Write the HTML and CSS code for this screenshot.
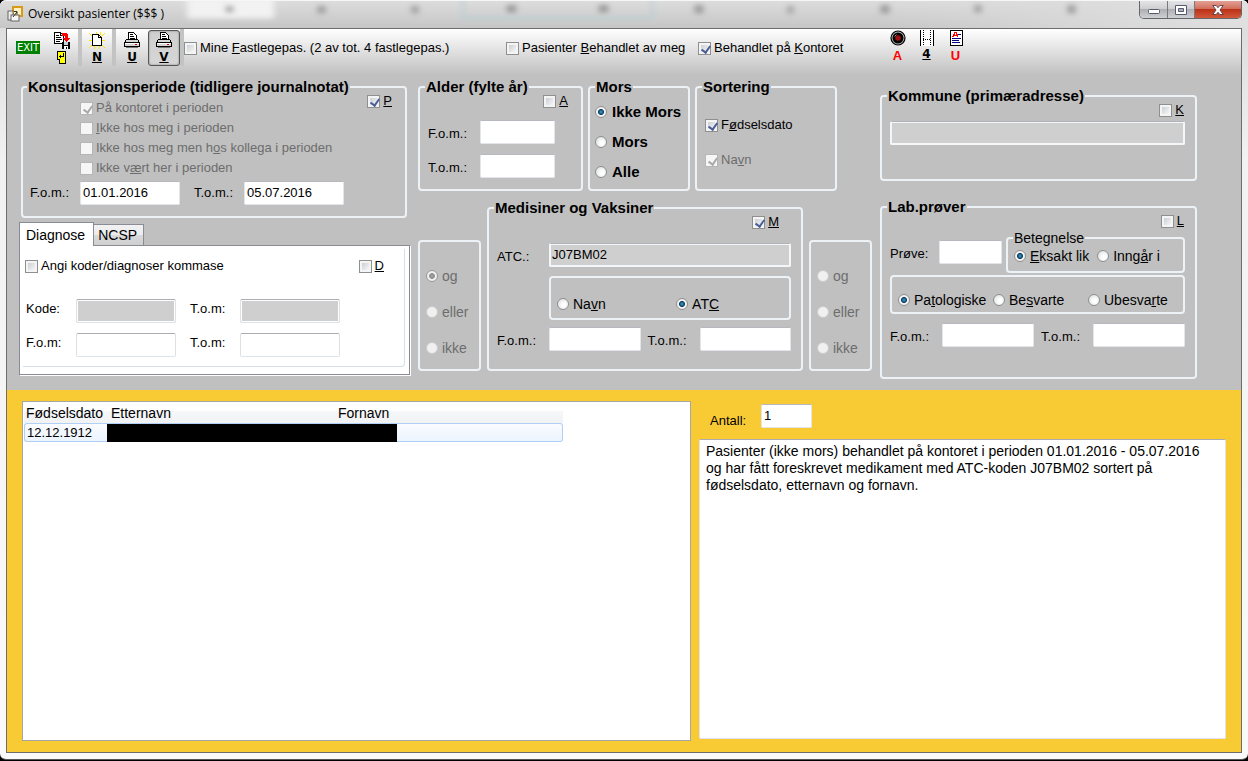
FILE: index.html
```html
<!DOCTYPE html>
<html lang="nb">
<head>
<meta charset="utf-8">
<title>Oversikt pasienter</title>
<link rel="stylesheet" href="styles.css">
</head>
<body>
<div class="window">
  <header class="titlebar">
    <svg class="titlebar__glass" viewBox="0 0 1248 28" preserveAspectRatio="none" aria-hidden="true">
      <defs><filter id="blur" x="-50%" y="-100%" width="200%" height="300%"><feGaussianBlur stdDeviation="3"/></filter></defs>
      <g filter="url(#blur)">
        <rect x="187" y="-4" width="87" height="22" fill="#f2f2f2"/>
        <rect x="463" y="-6" width="189" height="24" fill="none" stroke="#b2ced2" stroke-width="2"/>
        <g fill="#979797">
          <rect x="226" y="5" width="7" height="7"/><rect x="318" y="5" width="7" height="8"/><rect x="412" y="5" width="6" height="8"/>
          <rect x="507" y="4" width="9" height="8"/><rect x="599" y="4" width="9" height="8"/><rect x="695" y="4" width="8" height="9"/>
          <rect x="788" y="5" width="5" height="8"/><rect x="881" y="4" width="8" height="9"/><rect x="975" y="4" width="6" height="8"/><rect x="1068" y="4" width="7" height="9"/>
        </g>
      </g>
    </svg>
    <svg class="titlebar__icon" viewBox="0 0 16 16" width="16" height="16" aria-hidden="true">
      <rect x="6" y="1" width="9" height="9" fill="#fff3c0" stroke="#d99a1c" stroke-width="2"/>
      <rect x="1" y="5" width="5" height="9" fill="#eee" stroke="#666"/>
      <rect x="4" y="9" width="8" height="6" fill="#f6f6f6" stroke="#666"/>
      <path d="M6 11l4-5M7 5.500h3v3" fill="none" stroke="#333"/>
    </svg>
    <h1 class="titlebar__title">Oversikt pasienter ($$$ )</h1>
    <div class="caption">
      <button class="caption__btn caption__btn--min" type="button" aria-label="Minimer">
        <svg viewBox="0 0 14 10" width="14" height="10"><rect x="1.500" y="4.500" width="11" height="4" rx="1" fill="#fff" stroke="#555a70"/></svg>
      </button>
      <button class="caption__btn caption__btn--max" type="button" aria-label="Maksimer">
        <svg viewBox="0 0 12 10" width="12" height="10"><path d="M.500.500h11v9H.500zM3.500 3.500v3h5v-3z" fill="#fff" fill-rule="evenodd" stroke="#555a70"/></svg>
      </button>
      <button class="caption__btn caption__btn--close" type="button" aria-label="Lukk">
        <svg viewBox="0 0 12 10" width="12" height="10"><path d="M.800.500h3.400L6 2.700 7.800.500h3.400L8 5l3.200 4.500H7.800L6 7.300 4.200 9.500H.800L4 5z" fill="#fff" stroke="#5a3a42" stroke-width=".900"/></svg>
      </button>
    </div>
  </header>

  <main class="client">
    <div class="toolbar" role="toolbar">
      <button class="tool tool--exit" type="button"><span class="tool__exit">EXIT</span></button>
      <button class="tool tool--save" type="button" aria-label="Lagre">
        <svg viewBox="0 0 16 33" width="16" height="33" shape-rendering="crispEdges">
          <path d="M.500.500h6l3 3v8h-9z" fill="#fff" stroke="#000"/><path d="M6.500.500v3h3" fill="none" stroke="#000"/>
          <path d="M2 3.500h3M2 5.500h5M2 7.500h6M2 9.500h4" stroke="#000"/>
          <path d="M8 1h5v1h1v4h2v1h-1v1h-1v1h-1v1h-1V9h-1V8h-1V7H9V6h2V4H8z" fill="#f00"/>
          <rect x="8" y="10" width="8" height="7" fill="#000"/><rect x="10" y="10" width="4" height="3" fill="#c8d0d8"/><rect x="10" y="14" width="4" height="3" fill="#fff"/><rect x="12" y="15" width="1" height="2" fill="#000"/>
          <rect x="3" y="19" width="9" height="9" fill="#000"/><rect x="5" y="26" width="7" height="6" fill="#000"/>
          <rect x="4" y="20" width="7" height="7" fill="#ff0"/><rect x="6" y="26" width="5" height="5" fill="#ff0"/>
          <path d="M9.500 21v4M5 24.500h5M6.500 23v3" stroke="#000"/>
        </svg>
      </button>
      <span class="toolbar__bar"></span>
      <button class="tool tool--new" type="button">
        <svg viewBox="0 0 16 17" width="16" height="17" shape-rendering="crispEdges">
          <path d="M0 1l4 4M16 1l-4 4M0 16l4-4M16 16l-4-4M7 0v3M0 8h3M13 8h3M5 14v3M10 14v3M11 0v3" stroke="#ffe600"/>
          <path d="M3.500 2.500h6l3 3v8h-9z" fill="#fff" stroke="#000"/><path d="M9.500 2.500v3h3" fill="none" stroke="#000"/>
        </svg>
        <u class="tool__key">N</u>
      </button>
      <span class="toolbar__bar"></span>
      <button class="tool" type="button">
        <svg viewBox="0 0 16 17" width="16" height="17" shape-rendering="crispEdges">
          <path d="M4.500 7.500v-7h5l3 3v4z" fill="#fff" stroke="#000"/><path d="M6 2.500h3M6 4.500h4M6 6.500h5" stroke="#000"/>
          <path d="M2.500 7.500h11l2 3v4h-15v-4z" fill="#d4d4d4" stroke="#000"/><path d="M1 10.500h14" stroke="#000"/><path d="M1 11.500h14" stroke="#fff"/><path d="M11 12.500h2" stroke="#c00"/><path d="M2 15.500h12" stroke="#777"/>
        </svg>
        <u class="tool__key">U</u>
      </button>
      <button class="tool tool--pressed" type="button" aria-pressed="true">
        <svg viewBox="0 0 16 17" width="16" height="17" shape-rendering="crispEdges">
          <path d="M4.500 7.500v-7h5l3 3v4z" fill="#fff" stroke="#000"/><path d="M6 2.500h3M6 4.500h4M6 6.500h5" stroke="#000"/>
          <path d="M2.500 7.500h11l2 3v4h-15v-4z" fill="#d4d4d4" stroke="#000"/><path d="M1 10.500h14" stroke="#000"/><path d="M1 11.500h14" stroke="#fff"/><path d="M11 12.500h2" stroke="#c00"/><path d="M2 15.500h12" stroke="#777"/>
        </svg>
        <u class="tool__key">V</u>
      </button>
      <span class="toolbar__bar"></span>
      <label class="choice toolbar__mine"><input type="checkbox" class="check"><span>Mine <u>F</u>astlegepas. (2 av tot. 4 fastlegepas.)</span></label>
      <label class="choice toolbar__opt"><input type="checkbox" class="check"><span>Pasienter <u>B</u>ehandlet av meg</span></label>
      <label class="choice toolbar__opt"><input type="checkbox" class="check" checked><span>Behandlet på <u>K</u>ontoret</span></label>
      <button class="tool tool--flat" type="button">
        <svg viewBox="0 0 16 16" width="16" height="16">
          <circle cx="8" cy="8" r="7" fill="#bbb" stroke="#000" stroke-width="1.200"/><circle cx="8" cy="8" r="5.500" fill="#000"/><circle cx="8" cy="8" r="2.800" fill="#a01010"/><path d="M4.500 6.500l2-2" stroke="#999"/>
        </svg>
        <span class="tool__key tool__key--red">A</span>
      </button>
      <button class="tool tool--flat" type="button">
        <svg viewBox="0 0 16 16" width="16" height="16" shape-rendering="crispEdges">
          <rect x="2" y="0" width="12" height="16" fill="#fff"/>
          <path d="M1.500 0v16M14.500 0v16" stroke="#000"/><path d="M4.500 0v16M11.500 0v16M4 9.500h8" stroke="#000" stroke-dasharray="1 1"/>
        </svg>
        <u class="tool__key">4</u>
      </button>
      <button class="tool tool--flat" type="button">
        <svg viewBox="0 0 16 16" width="16" height="16" shape-rendering="crispEdges">
          <rect x="2.500" y=".500" width="12" height="15" fill="#fff" stroke="#000"/>
          <path d="M4 6.500h1v-2h1v-2h2v2h1v2h1M5 5.500h4" fill="none" stroke="#f00"/>
          <path d="M10 4.500h3M4 8.500h9M4 10.500h7M4 12.500h8" stroke="#000080"/>
        </svg>
        <span class="tool__key tool__key--red">U</span>
      </button>
    </div>

    <form class="filters">
      <div class="filters__left">
        <fieldset class="group group--period">
          <legend class="group__title">Konsultasjonsperiode (tidligere journalnotat)</legend>
          <div class="period">
            <div class="period__list">
              <label class="choice choice--off"><input type="checkbox" class="check" checked disabled><span>På kontoret i perioden</span></label>
              <label class="choice choice--off"><input type="checkbox" class="check" disabled><span><u>I</u>kke hos meg i perioden</span></label>
              <label class="choice choice--off"><input type="checkbox" class="check" disabled><span>Ikke hos meg men h<u>o</u>s kollega i perioden</span></label>
              <label class="choice choice--off"><input type="checkbox" class="check" disabled><span>Ikke v<u>æ</u>rt her i perioden</span></label>
            </div>
            <label class="choice"><input type="checkbox" class="check" checked><u>P</u></label>
          </div>
          <div class="pair">
            <label class="field"><span class="field__label">F.o.m.:</span><input class="box" type="text" value="01.01.2016"></label>
            <label class="field"><span class="field__label">T.o.m.:</span><input class="box" type="text" value="05.07.2016"></label>
          </div>
        </fieldset>

        <div class="tabs">
          <div class="tabs__row" role="tablist">
            <button class="tab tab--active" type="button" role="tab" aria-selected="true">Diagnose</button>
            <button class="tab" type="button" role="tab" aria-selected="false">NCSP</button>
          </div>
          <div class="panel" role="tabpanel">
            <div class="panel__inner">
              <div class="panel__head">
                <label class="choice"><input type="checkbox" class="check"><span>Angi koder/diagnoser kommase</span></label>
                <label class="choice"><input type="checkbox" class="check"><u>D</u></label>
              </div>
              <div class="pair">
                <label class="field"><span class="field__label">Kode:</span><input class="box box--line box--off" type="text" disabled></label>
                <label class="field"><span class="field__label">T.o.m:</span><input class="box box--line box--off" type="text" disabled></label>
              </div>
              <div class="pair">
                <label class="field"><span class="field__label">F.o.m:</span><input class="box box--line" type="text"></label>
                <label class="field"><span class="field__label">T.o.m:</span><input class="box box--line" type="text"></label>
              </div>
            </div>
          </div>
        </div>
      </div>

      <div class="filters__middle">
        <div class="trio">
          <fieldset class="group group--age">
            <legend class="group__title">Alder (fylte år)</legend>
            <div class="corner corner--age"><label class="choice"><input type="checkbox" class="check"><u>A</u></label></div>
            <label class="field field--low"><span class="field__label">F.o.m.:</span><input class="box" type="text"></label>
            <label class="field field--low"><span class="field__label">T.o.m.:</span><input class="box" type="text"></label>
          </fieldset>
          <fieldset class="group group--mors">
            <legend class="group__title">Mors</legend>
            <label class="choice choice--bold"><input type="radio" class="radio" name="mors" checked><span>Ikke Mors</span></label>
            <label class="choice choice--bold"><input type="radio" class="radio" name="mors"><span>Mors</span></label>
            <label class="choice choice--bold"><input type="radio" class="radio" name="mors"><span>Alle</span></label>
          </fieldset>
          <fieldset class="group group--sort">
            <legend class="group__title">Sortering</legend>
            <label class="choice"><input type="checkbox" class="check" checked><span>F<u>ø</u>dselsdato</span></label>
            <label class="choice choice--off"><input type="checkbox" class="check" checked disabled><span>Na<u>v</u>n</span></label>
          </fieldset>
        </div>
        <div class="medrow">
          <fieldset class="group group--logic" aria-label="Kobling diagnose">
            <label class="choice choice--alt choice--off"><input type="radio" class="radio" name="kobling1" checked disabled><span>og</span></label>
            <label class="choice choice--alt choice--off"><input type="radio" class="radio" name="kobling1" disabled><span>eller</span></label>
            <label class="choice choice--alt choice--off"><input type="radio" class="radio" name="kobling1" disabled><span>ikke</span></label>
          </fieldset>
          <fieldset class="group group--med">
            <legend class="group__title">Medisiner og Vaksiner</legend>
            <div class="corner corner--med"><label class="choice"><input type="checkbox" class="check" checked><u>M</u></label></div>
            <label class="field field--low"><span class="field__label">ATC.:</span><input class="box box--gray" type="text" value="J07BM02" readonly></label>
            <fieldset class="group group--by" aria-label="Søk på">
              <label class="choice choice--alt"><input type="radio" class="radio" name="by"><span>Na<u>v</u>n</span></label>
              <label class="choice choice--alt"><input type="radio" class="radio" name="by" checked><span>AT<u>C</u></span></label>
            </fieldset>
            <div class="pair pair--tight">
              <label class="field field--low"><span class="field__label">F.o.m.:</span><input class="box" type="text"></label>
              <label class="field field--low"><span class="field__label">T.o.m.:</span><input class="box" type="text"></label>
            </div>
          </fieldset>
          <fieldset class="group group--logic" aria-label="Kobling lab">
            <label class="choice choice--alt choice--off"><input type="radio" class="radio" name="kobling2" disabled><span>og</span></label>
            <label class="choice choice--alt choice--off"><input type="radio" class="radio" name="kobling2" disabled><span>eller</span></label>
            <label class="choice choice--alt choice--off"><input type="radio" class="radio" name="kobling2" disabled><span>ikke</span></label>
          </fieldset>
        </div>
      </div>

      <div class="filters__right">
        <fieldset class="group group--kommune">
          <legend class="group__title">Kommune (primæradresse)</legend>
          <div class="corner"><label class="choice"><input type="checkbox" class="check"><u>K</u></label></div>
          <input class="box box--gray" type="text" aria-label="Kommune" readonly>
        </fieldset>
        <fieldset class="group group--lab">
          <legend class="group__title">Lab.prøver</legend>
          <div class="corner"><label class="choice"><input type="checkbox" class="check"><u>L</u></label></div>
          <div class="labrow">
            <label class="field field--low field--test"><span class="field__label">Prøve:</span><input class="box" type="text"></label>
            <fieldset class="group group--match">
              <legend class="group__title group__title--plain">Betegnelse</legend>
              <label class="choice choice--alt"><input type="radio" class="radio" name="match" checked><span><u>E</u>ksakt lik</span></label>
              <label class="choice choice--alt"><input type="radio" class="radio" name="match"><span>Inng<u>å</u>r i</span></label>
            </fieldset>
          </div>
          <fieldset class="group group--status" aria-label="Status">
            <label class="choice choice--alt"><input type="radio" class="radio" name="status" checked><span>Pa<u>t</u>ologiske</span></label>
            <label class="choice choice--alt"><input type="radio" class="radio" name="status"><span>Be<u>s</u>varte</span></label>
            <label class="choice choice--alt"><input type="radio" class="radio" name="status"><span>Ubesva<u>r</u>te</span></label>
          </fieldset>
          <div class="pair pair--tight">
            <label class="field field--low"><span class="field__label">F.o.m.:</span><input class="box" type="text"></label>
            <label class="field field--low"><span class="field__label">T.o.m.:</span><input class="box" type="text"></label>
          </div>
        </fieldset>
      </div>
    </form>

    <section class="results">
      <div class="list">
        <table class="patients">
          <colgroup><col class="patients__born"><col class="patients__last"><col></colgroup>
          <thead><tr><th>Fødselsdato</th><th>Etternavn</th><th>Fornavn</th></tr></thead>
          <tbody><tr><td>12.12.1912</td><td colspan="2" class="patients__name"><div class="patients__mask"></div></td></tr></tbody>
        </table>
      </div>
      <div class="summary">
        <label class="field field--low field--count"><span class="field__label">Antall:</span><input class="box" type="text" value="1"></label>
        <textarea class="summary__text" aria-label="Beskrivelse" readonly>Pasienter (ikke mors) behandlet på kontoret i perioden 01.01.2016 - 05.07.2016 og har fått foreskrevet medikament med ATC-koden J07BM02 sortert på fødselsdato, etternavn og fornavn.</textarea>
      </div>
    </section>
  </main>
</div>
</body>
</html>
```
FILE: styles.css
```css
* { box-sizing: border-box; }

body {
  margin: 0;
  height: 100vh;
  background: #000;
  font: 13px/14px "Liberation Sans", Arial, sans-serif;
  color: #000;
}

button, input, textarea { font: inherit; color: inherit; }

/* Window frame */
.window {
  display: flex;
  flex-direction: column;
  height: calc(100vh - 1px);
  padding: 0 6px 6px;
  border-bottom: 1px solid #555;
  border-radius: 6px;
  background: linear-gradient(#dadada, #e2e2e2 60px, #f2f2f2 160px, #fafafa);
}

.titlebar {
  position: relative;
  display: flex;
  align-items: flex-start;
  height: 28px;
  margin: 0 -6px;
  padding: 0 6px 0 7px;
  border-top: 1px solid #f6f6f6;
  border-radius: 6px 6px 0 0;
  background: linear-gradient(90deg, #dcdcdc00 70%, #dcdcdcaa 85%, #e0e0e0), linear-gradient(#dcdcdc, #c6c6c6);
  overflow: hidden;
}

.titlebar__glass { position: absolute; inset: 0; width: 100%; height: 100%; }
.titlebar__icon { position: relative; margin: 5px 5px 0 0; }

.titlebar__title {
  position: relative;
  flex: 1;
  margin: 0;
  font: 12px/26px "Open Sans", "Noto Sans", sans-serif;
}

.caption {
  position: relative;
  display: flex;
  border: 1px solid #63666b;
  border-top: 0;
  border-radius: 0 0 5px 5px;
  overflow: hidden;
}

.caption__btn {
  display: flex;
  align-items: center;
  justify-content: center;
  width: 28px;
  height: 17px;
  padding: 0;
  border: 0;
  border-right: 1px solid #77797d;
  background: linear-gradient(#e4e4e6, #cfcfd2 45%, #aeafb3 50%, #cfd0d3);
}
.caption__btn--max { width: 27px; }
.caption__btn--close {
  width: 46px;
  border-right: 0;
  background: linear-gradient(#e3a094, #d2705f 45%, #bb3219 50%, #d4583a);
}

.client {
  display: flex;
  flex: 1;
  flex-direction: column;
  min-height: 0;
  border: 1px solid #6d6d6d;
  background: linear-gradient(#fff, #c0c0c0 46px);
}

/* Toolbar */
.toolbar {
  display: flex;
  align-items: flex-start;
  height: 51px;
  padding-left: 3px;
}

.toolbar__bar { width: 4px; height: 37px; background: #c3c3c3; }

.tool {
  display: flex;
  flex-direction: column;
  align-items: center;
  width: 32px;
  height: 36px;
  margin-top: 1px;
  padding: 1px 0 0;
  border: 1px solid transparent;
  border-radius: 3px;
  background: none;
}
.tool--exit { width: 36px; padding-top: 10px; }
.tool--save { width: 32px; }
.tool--new { width: 30px; }
.tool--flat { width: 29px; padding-top: 0; border: 0; }
.tool--pressed {
  border-color: #555;
  background: linear-gradient(#cfcfcf, #d6d6d6);
  box-shadow: inset 0 0 2px #777;
}

.tool__exit {
  padding: 0 1px;
  background: #008000;
  color: #fff;
  font: 10px/13px "DejaVu Sans", sans-serif;
}
.tool__key { font: bold 12px/16px "DejaVu Sans", sans-serif; }
.tool__key--red { color: #f00; font: bold 13px/20px "Liberation Sans", sans-serif; }

.toolbar__mine, .toolbar__opt { margin-top: 12px; }
.toolbar__mine { width: 322px; }
.toolbar__opt { width: 192px; }
.toolbar__opt + .toolbar__opt { width: 185px; }

/* Check boxes and radio buttons */
.choice { display: flex; align-items: center; gap: 3px; min-height: 14px; white-space: nowrap; }
.choice--off { color: #6d6d6d; }
.choice--alt { gap: 4px; font-size: 14px; }
.choice--bold { gap: 5px; height: 30px; font-size: 15px; font-weight: bold; }

.check {
  position: relative;
  flex: none;
  width: 13px;
  height: 13px;
  margin: 0;
  border: 1px solid #8e8f8f;
  background: linear-gradient(135deg, #cbcfd5, #f6f6f6) content-box, #f4f4f4;
  padding: 2px;
  appearance: none;
}
.check:checked::after {
  content: "";
  position: absolute;
  left: 4px;
  top: 1px;
  width: 4px;
  height: 7px;
  border: solid #4a5f97;
  border-width: 0 2px 2px 0;
  transform: rotate(35deg);
}
.check:disabled { border-color: #b5b5b5; background: #f6f6f6; }
.check:checked:disabled::after { border-color: #a9a9a9; }

.radio {
  flex: none;
  width: 12px;
  height: 12px;
  margin: 0;
  border: 1px solid #8e8f8f;
  border-radius: 50%;
  background: radial-gradient(circle at 60% 60%, #fff 20%, #d4d7da);
  appearance: none;
}
.radio:checked { background: radial-gradient(circle, #49a5cf, #1b6c97 20%, #0f3a5e 38%, #f2f2f2 46%); }
.radio:disabled { border-color: #ccc; background: #f0f0f0; }
.radio:checked:disabled { border-color: #999; background: radial-gradient(circle, #aaa, #888 35%, #f0f0f0 45%); }

/* Text boxes */
.box {
  width: 100px;
  height: 24px;
  min-width: 0;
  padding: 0 2px 1px;
  border: 1px solid #e2e6ea;
  border-top-color: #b5b8bf;
  border-radius: 2px;
  background: #fff;
}
.box--line { border-color: #abadb3 #dde0e6 #dde3ea; }
.box--off { background: #cfcfcf; box-shadow: inset 0 0 0 1px #fff; }
.box--gray { padding-left: 1px; border: 2px solid #f4f7f9; border-top: 1px solid #b0b2b6; background: #cfcfcf; box-shadow: inset 0 1px 0 #f4f7f9; }

.field { display: flex; align-items: center; }
.field__label { flex: none; width: 50px; }
.field--low { align-items: flex-end; }
.field--low .field__label { width: 52px; line-height: 20px; }

.pair { display: flex; gap: 14px; }
.pair--tight { gap: 7px; }
.pair--tight .field { flex: 1; min-width: 0; }
.pair--tight .box { flex: 1; width: 0; }

/* Group boxes */
.group {
  min-width: 0;
  margin: 0;
  padding: 0 10px 0 8px;
  border: 2px solid #ecf2f6;
  border-radius: 4px;
}
.group__title { margin-left: -3px; padding: 0 1px; font-size: 15px; font-weight: bold; line-height: 14px; }
.group__title--plain { margin-left: -1px; font-size: 14px; font-weight: normal; }

.corner { display: flex; justify-content: flex-end; padding-right: 1px; }
.corner--age { padding-right: 3px; margin-bottom: 12px; }
.corner--med { padding-right: 12px; margin-bottom: 14px; }

.filters {
  display: grid;
  grid-template-columns: 391fr 454fr 317fr;
  gap: 8px;
  padding: 0 44px 11px 12px;
}

.group--period { margin: 0 3px 4px 2px; padding: 0 13px 11px 7px; }
.period { display: flex; justify-content: space-between; align-items: flex-start; margin-bottom: 3px; }
.period__list { padding: 4px 0 0 50px; }
.period__list .choice { height: 20px; }

/* Tabs */
.tabs__row { display: flex; align-items: flex-end; }
.tab {
  height: 21px;
  padding: 0 6px 0 4px;
  border: 1px solid #898c95;
  border-bottom: 0;
  background: linear-gradient(#f2f2f2, #ebebeb 50%, #dadada 50%, #cfcfcf);
  font-size: 14px;
  line-height: 20px;
}
.tab--active { z-index: 1; height: 24px; margin: 0 -1px -1px 0; padding: 0 8px 0 6px; background: #fff; }

.panel {
  padding: 3px 4px 7px 3px;
  border: 1px solid #898c95;
  background: #fff;
  box-shadow: 1px 1px 0 #fff;
}
.panel__inner {
  display: flex;
  flex-direction: column;
  gap: 10px;
  padding: 10px 20px 9px 3px;
  border: solid #d5dfe5;
  border-width: 0 1px 1px 0;
  border-radius: 0 0 4px;
}
.panel__head { display: flex; justify-content: space-between; margin: 0 0 16px -1px; }
.panel .field__label { padding-bottom: 4px; }

/* Middle column */
.filters__middle { display: flex; flex-direction: column; gap: 10px; }
.trio { display: grid; grid-template-columns: 165fr 102fr 142fr; gap: 5px; height: 111px; padding-right: 35px; }
.group--age .field + .field { margin-top: 10px; }
.group--age .box { flex: 1; width: 0; margin-right: 16px; }
.group--mors { padding: 3px 0 0 5px; }
.group--mors .group__title { margin-left: 0; }
.group--sort { padding-top: 24px; }
.group--sort .choice + .choice { margin-top: 21px; }

.medrow { display: grid; grid-template-columns: 63fr 316fr 63fr; gap: 6px; align-items: end; }
.group--logic { padding: 16px 0 3px 6px; }
.group--logic .choice { height: 36px; }
.group--med { padding-bottom: 18px; }
.group--med > .field .box { flex: 1; }
.group--by {
  display: grid;
  grid-template-columns: 116fr 110fr;
  margin: 9px 0 7px 52px;
  padding: 19px 0 7px 6px;
}

/* Right column */
.filters__right { display: flex; flex-direction: column; gap: 19px; padding-top: 9px; }
.group--kommune { height: 92px; }
.group--kommune .box { width: 100%; margin-top: 4px; }
.group--lab { padding-bottom: 30px; }
.labrow { display: flex; align-items: center; gap: 4px; margin: 3px 0 2px; }
.field--test .field__label { width: 49px; }
.field--test .box { width: 63px; }
.group--match { display: flex; flex: 1; gap: 8px; padding: 4px 0 8px 6px; }
.group--status {
  display: grid;
  grid-template-columns: 95fr 95fr 95fr;
  margin-bottom: 9px;
  padding: 16px 0 5px 6px;
}

/* Results */
.results {
  display: grid;
  flex: 1;
  grid-template-columns: 669fr 527fr;
  gap: 8px;
  min-height: 0;
  padding: 11px 15px 11px;
  background: #f8cb35;
}
.list { padding: 1px; border: 1px solid #a5a7a3; background: #fff; }

.patients { width: 81%; table-layout: fixed; border-spacing: 0; }
.patients__born { width: 83px; }
.patients__last { width: 227px; }
.patients th {
  height: 20px;
  padding: 0 0 0 4px;
  background: linear-gradient(#fff 40%, #f6f7f8 40%, #f1f2f4);
  font-size: 14px;
  font-weight: normal;
  text-align: left;
}
.patients th:first-child { padding-left: 2px; }
.patients td {
  height: 19px;
  padding: 0 0 0 2px;
  border: solid #b0d0f5;
  border-width: 1px 0 1px 1px;
  border-radius: 3px 0 0 3px;
  background: linear-gradient(#fafcff, #ebf3fd);
}
.patients td.patients__name { padding: 0; border-width: 1px 1px 1px 0; border-radius: 0 3px 3px 0; }
.patients__mask { width: 290px; height: 18px; margin-bottom: -1px; background: #000; }

.summary { display: flex; flex-direction: column; gap: 11px; padding: 3px 0 2px; }
.field--count { padding-left: 11px; }
.field--count .field__label { width: 51px; line-height: 14px; }
.field--count .box { width: 51px; }
.summary__text {
  flex: 1;
  padding: 3px 10px 3px 6px;
  border: 1px solid #e2e3ea;
  border-top-color: #abadb3;
  border-radius: 2px;
  background: #fff;
  font-size: 14px;
  line-height: 17px;
  resize: none;
}
```
